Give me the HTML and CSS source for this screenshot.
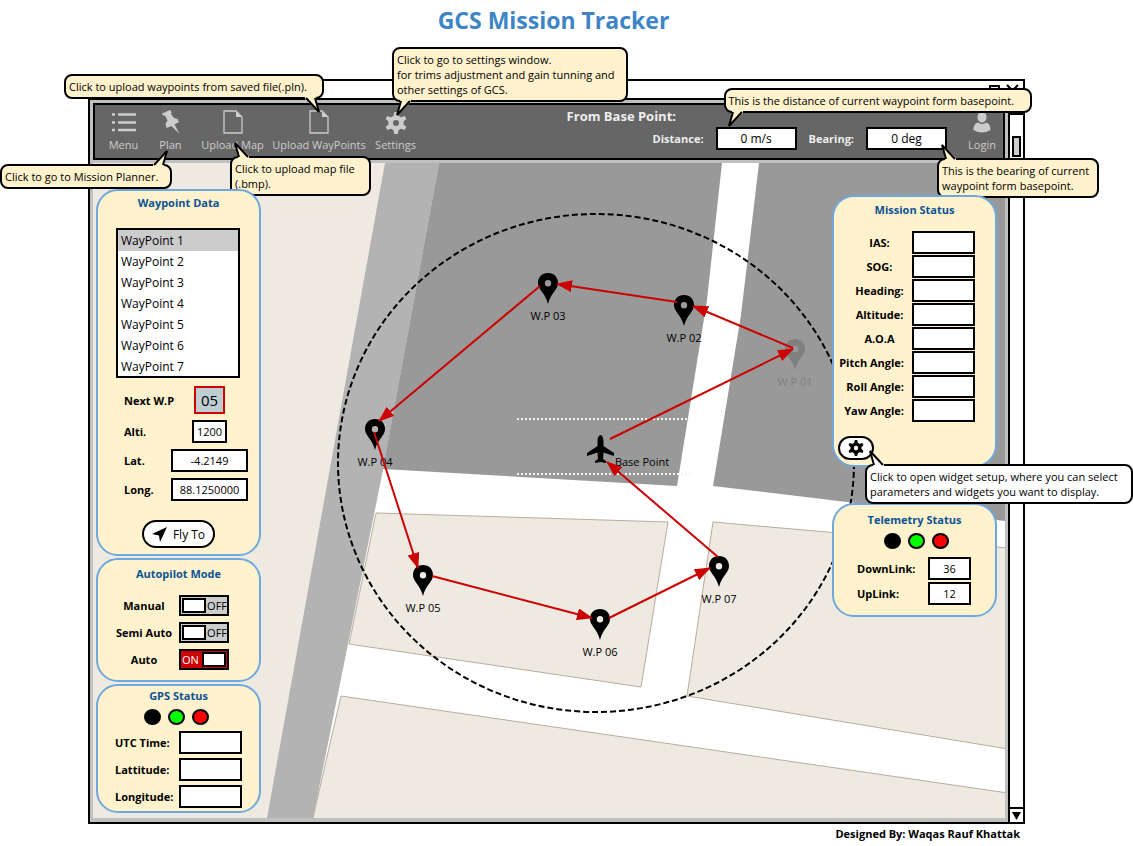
FILE: index.html
```html
<!DOCTYPE html>
<html lang="en">
<head>
<meta charset="utf-8">
<title>GCS Mission Tracker</title>
<link rel="stylesheet" href="styles.css">
</head>
<body>
<svg class="defs" aria-hidden="true">
  <symbol id="tail" viewBox="0 0 18 18">
    <path class="tail-fill" d="M5 18V15L2 2L16 15V18Z"/>
    <path class="tail-line" d="M6 16L2 2L15 16"/>
  </symbol>
  <symbol id="file" viewBox="0 0 20 24">
    <path d="M1 1H13L19 7V23H1Z" fill="none" stroke="#ccc" stroke-width="1.3"/>
    <path d="M13 1L19 7H13Z" fill="#ccc"/>
  </symbol>
  <symbol id="gear" viewBox="0 0 22 22">
    <circle cx="11" cy="11" r="5.300" fill="none" stroke="currentColor" stroke-width="4.600"/>
    <path fill="currentColor" d="M9.300 0H12.700L13.800 5H8.200ZM9.300 22H12.700L13.800 17H8.200ZM.6 7L2.400 4L7.300 5.700L4.500 10.500ZM21.400 7L19.600 4L14.700 5.700L17.500 10.500ZM.6 15L2.400 18L7.300 16.300L4.500 11.500ZM21.400 15L19.600 18L14.700 16.300L17.500 11.500Z"/>
  </symbol>
  <symbol id="pin" viewBox="-10 0 20 31">
    <path fill-rule="evenodd" d="M0 0C-6 0-10 4-10 10C-10 17-3 19 0 31C3 19 10 17 10 10C10 4 6 0 0 0ZM0 7a3.200 3.200 0 1 1 0 6.400a3.200 3.200 0 1 1 0-6.400Z"/>
  </symbol>
</svg>

<h1 class="page-title">GCS Mission Tracker</h1>

<main class="window">
  <div class="titlebar">
    <svg width="36" height="14" viewBox="0 0 36 14" aria-hidden="true">
      <path d="M6 2H15V12H6ZM23 1L34 12M34 1L23 12" fill="none" stroke="#000" stroke-width="2"/>
    </svg>
  </div>
  <div class="body">
    <div class="client">
      <header class="toolbar">
        <nav class="tools">
          <div class="tool">
            <button type="button" class="tool-button">
              <svg width="24" height="24" viewBox="0 0 24 24" aria-hidden="true"><path d="M0 4.500H3M6 4.500H24M0 12.500H3M6 12.500H24M0 20H3M6 20H24" stroke="#ccc" stroke-width="2.500"/></svg>
              Menu
            </button>
          </div>
          <div class="tool">
            <button type="button" class="tool-button">
              <svg width="18" height="24" viewBox="0 0 18 24" aria-hidden="true"><path fill="#ccc" d="M8 0L9.500 2L9 4L12 8L15.500 9L17 12L12.500 14.500L17.500 24L9.500 16L4.500 18L3.500 14L5.500 10.500L3 5.500L1 5.500L0 3.500Z"/></svg>
              Plan
            </button>
            <div class="tip tip-planner" role="tooltip">Click to go to Mission Planner.<svg class="tail up right"><use href="#tail"/></svg></div>
          </div>
          <div class="tool">
            <button type="button" class="tool-button">
              <svg width="20" height="24" aria-hidden="true"><use href="#file"/></svg>
              Upload Map
            </button>
            <div class="tip tip-map" role="tooltip">Click to upload map file<br>(.bmp).<svg class="tail up left"><use href="#tail"/></svg></div>
          </div>
          <div class="tool">
            <button type="button" class="tool-button">
              <svg width="20" height="24" aria-hidden="true"><use href="#file"/></svg>
              Upload WayPoints
            </button>
            <div class="tip tip-waypoints" role="tooltip">Click to upload waypoints from saved file(.pln).<svg class="tail down right"><use href="#tail"/></svg></div>
          </div>
          <div class="tool">
            <button type="button" class="tool-button">
              <svg width="22" height="22" aria-hidden="true"><use href="#gear"/></svg>
              Settings
            </button>
            <div class="tip tip-settings" role="tooltip">Click to go to settings window.<br>for trims adjustment and gain tunning and<br>other settings of GCS.<svg class="tail down left"><use href="#tail"/></svg></div>
          </div>
        </nav>
        <section class="readings">
          <h2 class="readings-title">From Base Point:</h2>
          <div class="reading-row">
            <label for="distance">Distance:</label>
            <div class="anchor">
              <input class="field reading" id="distance" value="0 m/s">
              <div class="tip tip-distance" role="tooltip">This is the distance of current waypoint form basepoint.<svg class="tail down left"><use href="#tail"/></svg></div>
            </div>
            <label for="bearing">Bearing:</label>
            <div class="anchor">
              <input class="field reading" id="bearing" value="0 deg">
              <div class="tip tip-bearing" role="tooltip">This is the bearing of current<br>waypoint form basepoint.<svg class="tail up left"><use href="#tail"/></svg></div>
            </div>
          </div>
        </section>
        <button type="button" class="tool-button login">
          <svg width="18" height="22" viewBox="0 0 18 22" aria-hidden="true"><path fill="#ccc" d="M9 0C12 0 13.500 2 13.500 5C13.500 8 11.500 10.500 9 10.500C6.500 10.500 4.500 8 4.500 5C4.500 2 6 0 9 0ZM5 10.500Q9 13.500 13 10.500C16.500 11.500 17.500 14 17.500 18Q9 23 .5 18C.5 14 1.500 11.500 5 10.500Z"/></svg>
          Login
        </button>
      </header>

      <div class="map">
        <svg class="map-art" viewBox="93 163 912 655" preserveAspectRatio="xMidYMid slice">
          <defs>
            <marker id="head" markerUnits="userSpaceOnUse" markerWidth="16" markerHeight="12" refX="15" refY="6" orient="auto"><path d="M0 0L16 6L0 12Z" fill="#c00"/></marker>
          </defs>
          <path fill="#b3b3b3" d="M385 163H440L384 470L314 818H267Z"/>
          <path fill="#fff" d="M439 163H1005V818H313L383 470Z"/>
          <path fill="#999" d="M439 163H722L707 300L677 486L383 469ZM759 163H1005V521L713 486L741 315Z"/>
          <path fill="#eee9e1" stroke="#b9ad9b" d="M376 513L668 522L641 687L349 644ZM713 522L1008 548V749L687 696ZM341 696L1008 793V822H312Z"/>
          <ellipse cx="596" cy="463" rx="258" ry="249" fill="none" stroke="#000" stroke-width="2" stroke-dasharray="6 3"/>
          <path d="M517 419H691M517 474H691" stroke="#f3f3f3" stroke-width="2" stroke-dasharray="2 2"/>
          <use href="#pin" x="785" y="339" width="20" height="31" fill="#808080"/>
          <use href="#pin" x="674" y="295" width="20" height="31"/>
          <use href="#pin" x="538" y="273" width="20" height="31"/>
          <use href="#pin" x="365" y="419" width="20" height="31"/>
          <use href="#pin" x="413" y="565" width="20" height="31"/>
          <use href="#pin" x="590" y="609" width="20" height="31"/>
          <use href="#pin" x="709" y="556" width="20" height="31"/>
          <path d="M600.500 435C602 435 603.500 438 603.500 441V446L614 453V456L603.500 452.500L603 459L606 461V463L600.500 462L595 463V461L598 459L597.500 452.500L587 456V453L597.500 446V441C597.500 438 599 435 600.500 435Z"/>
          <g class="pin-names">
            <text x="795" y="386" fill="#808080">W.P 01</text>
            <text x="684" y="342">W.P 02</text>
            <text x="548" y="320">W.P 03</text>
            <text x="375" y="466">W.P 04</text>
            <text x="423" y="612">W.P 05</text>
            <text x="600" y="656">W.P 06</text>
            <text x="719" y="603">W.P 07</text>
            <text x="642" y="466">Base Point</text>
          </g>
          <g stroke="#c00" stroke-width="2">
            <path marker-end="url(#head)" d="M610 439L793 349"/>
            <path marker-end="url(#head)" d="M793 348L693 306"/>
            <path marker-end="url(#head)" d="M677 302L557 284"/>
            <path marker-end="url(#head)" d="M540 286L379 421"/>
            <path marker-end="url(#head)" d="M374 432L418 568"/>
            <path marker-end="url(#head)" d="M432 576L592 618"/>
            <path marker-end="url(#head)" d="M609 618L710 568"/>
            <path marker-end="url(#head)" d="M718 557L607 462"/>
          </g>
        </svg>

        <div class="column">
          <section class="panel waypoint">
            <h2 class="panel-title">Waypoint Data</h2>
            <select class="waypoint-list" size="7" aria-label="Waypoints">
              <option selected>WayPoint 1</option>
              <option>WayPoint 2</option>
              <option>WayPoint 3</option>
              <option>WayPoint 4</option>
              <option>WayPoint 5</option>
              <option>WayPoint 6</option>
              <option>WayPoint 7</option>
            </select>
            <div class="rows">
              <div class="row"><label for="next">Next W.P</label><input class="field next" id="next" value="05"></div>
              <div class="row"><label for="alti">Alti.</label><input class="field alti" id="alti" value="1200"></div>
              <div class="row"><label for="lat">Lat.</label><input class="field" id="lat" value="-4.2149"></div>
              <div class="row"><label for="long">Long.</label><input class="field" id="long" value="88.1250000"></div>
            </div>
            <button type="button" class="pill fly">
              <svg width="15" height="15" viewBox="0 0 14 14" aria-hidden="true"><path d="M14 0L7.500 14L6.500 8L0 6.500Z"/></svg>
              Fly To
            </button>
          </section>

          <section class="panel autopilot">
            <h2 class="panel-title">Autopilot Mode</h2>
            <div class="rows">
              <label class="row"><span class="name">Manual</span><span class="toggle"><input type="checkbox"><span class="knob"></span><span class="state">OFF</span></span></label>
              <label class="row"><span class="name">Semi Auto</span><span class="toggle"><input type="checkbox"><span class="knob"></span><span class="state">OFF</span></span></label>
              <label class="row"><span class="name">Auto</span><span class="toggle on"><input type="checkbox" checked><span class="state">ON</span><span class="knob"></span></span></label>
            </div>
          </section>

          <section class="panel gps">
            <h2 class="panel-title">GPS Status</h2>
            <div class="lights"><span class="light"></span><span class="light green"></span><span class="light red"></span></div>
            <div class="rows">
              <div class="row"><label for="utc">UTC Time:</label><input class="field" id="utc"></div>
              <div class="row"><label for="lattitude">Lattitude:</label><input class="field" id="lattitude"></div>
              <div class="row"><label for="longitude">Longitude:</label><input class="field" id="longitude"></div>
            </div>
          </section>
        </div>

        <div class="column status-column">
          <section class="panel mission">
            <h2 class="panel-title">Mission Status</h2>
            <div class="rows">
              <div class="row"><label for="ias">IAS:</label><input class="field" id="ias"></div>
              <div class="row"><label for="sog">SOG:</label><input class="field" id="sog"></div>
              <div class="row"><label for="heading">Heading:</label><input class="field" id="heading"></div>
              <div class="row"><label for="altitude">Altitude:</label><input class="field" id="altitude"></div>
              <div class="row"><label for="aoa">A.O.A</label><input class="field" id="aoa"></div>
              <div class="row"><label for="pitch">Pitch Angle:</label><input class="field" id="pitch"></div>
              <div class="row"><label for="roll">Roll Angle:</label><input class="field" id="roll"></div>
              <div class="row"><label for="yaw">Yaw Angle:</label><input class="field" id="yaw"></div>
            </div>
            <div class="anchor setup">
              <button type="button" class="pill gear" aria-label="Widget setup"><svg width="16" height="16" aria-hidden="true"><use href="#gear"/></svg></button>
              <div class="tip tip-setup" role="tooltip">Click to open widget setup, where you can select<br>parameters and widgets you want to display.<svg class="tail up left"><use href="#tail"/></svg></div>
            </div>
          </section>

          <section class="panel telemetry">
            <h2 class="panel-title">Telemetry Status</h2>
            <div class="lights"><span class="light"></span><span class="light green"></span><span class="light red"></span></div>
            <div class="rows">
              <div class="row"><label for="down">DownLink:</label><input class="field" id="down" value="36"></div>
              <div class="row"><label for="up">UpLink:</label><input class="field" id="up" value="12"></div>
            </div>
          </section>
        </div>
      </div>
    </div>

    <div class="scrollbar">
      <div class="scroll-end"></div>
      <div class="track"><div class="thumb"></div></div>
      <div class="scroll-end bottom"><svg width="9" height="8" viewBox="0 0 9 8" aria-hidden="true"><path d="M0 0H9L4.500 8Z"/></svg></div>
    </div>
  </div>
</main>
<footer class="credit">Designed By: Waqas Rauf Khattak</footer>
</body>
</html>
```
FILE: styles.css
```css
* { box-sizing: border-box; }

body {
  margin: 0;
  background: #fff;
  color: #000;
  font: 11px/15px "Open Sans", "Noto Sans", sans-serif;
  overflow-x: hidden;
}

button, input, select { font: inherit; color: inherit; margin: 0; }

.defs { display: none; }

.page-title {
  margin: 0 0 38px;
  height: 41px;
  color: #3d85c6;
  font-size: 23px;
  line-height: 40px;
  text-align: center;
  padding-right: 26px;
}

.window {
  margin: 0 108px 0 88px;
  border: 2px solid #000;
}

.titlebar {
  display: flex;
  justify-content: flex-end;
  height: 17px;
  padding: 3px 3px 0;
}

.body { display: flex; border-top: 2px solid #000; }

.client {
  flex: 1;
  display: flex;
  flex-direction: column;
  gap: 3px;
  padding: 3px 3px 4px;
  background: #c0c0c0;
}

/* Toolbar */
.toolbar {
  position: relative;
  z-index: 1;
  display: flex;
  height: 57px;
  border: 2px solid #000;
  background: #666;
  color: #ccc;
}

.tools {
  display: grid;
  grid-template-columns: 57px 37px 87px 86px 67px;
}

.tool, .anchor { position: relative; }

.tool-button {
  display: flex;
  flex-direction: column;
  align-items: center;
  justify-content: flex-end;
  gap: 3px;
  width: 100%;
  height: 53px;
  padding: 0 0 6px;
  border: 0;
  background: none;
  white-space: nowrap;
}

.readings { margin-left: auto; font-weight: bold; color: #eee; }

.readings-title {
  margin: 4px 0 3px;
  font-size: 13px;
  line-height: 15px;
}

.reading-row {
  display: flex;
  align-items: center;
  justify-content: flex-end;
  gap: 12px;
  padding-left: 86px;
}

.login { width: 40px; margin: 0 1px 0 15px; }

/* Fields */
.field {
  display: block;
  width: 63px;
  height: 23px;
  padding: 0;
  border: 2px solid #000;
  background: #fff;
  color: #000;
  font-weight: normal;
  text-align: center;
}

.reading { width: 81px; font-size: 12px; }

/* Callouts */
.tip {
  position: absolute;
  border: 2px solid #000;
  border-radius: 8px;
  padding: 3px;
  background: #fff2cc;
  color: #000;
  font-weight: normal;
  white-space: nowrap;
  --tip-fill: #fff2cc;
}

.tip-planner { right: 17px; top: 59px; width: 172px; }
.tip-map { left: 41px; top: 51px; width: 141px; }
.tip-waypoints { right: 38px; top: -31px; width: 260px; }
.tip-settings { left: 30px; top: -58px; width: 236px; }
.tip-distance { left: 8px; top: -39px; width: 308px; }
.tip-bearing { left: 71px; top: 31px; width: 162px; }
.tip-setup { left: 27px; top: 28px; width: 268px; background: #fff; --tip-fill: #fff; }

.tail { position: absolute; width: 18px; height: 18px; }
.tail.up { bottom: 100%; margin-bottom: -1px; }
.tail.down { top: 100%; margin-top: -1px; }
.tail.left { left: 1px; }
.tail.right { right: 1px; }
.tail.up.right { transform: scaleX(-1); }
.tail.down.left { transform: scaleY(-1); }
.tail.down.right { transform: scale(-1); }
.tail-fill { fill: var(--tip-fill); }
.tail-line { fill: none; stroke: #000; stroke-width: 2; }

/* Map */
.map {
  position: relative;
  display: flex;
  justify-content: space-between;
  align-items: flex-start;
  padding: 26px 8px 5px 3px;
  background: #eee9e1;
}

.map-art {
  position: absolute;
  inset: 0;
  width: 100%;
  height: 100%;
}

.pin-names { text-anchor: middle; }

.column {
  position: relative;
  z-index: 2;
  display: flex;
  flex-direction: column;
  gap: 2px;
  width: 165px;
}

.status-column { gap: 36px; padding-top: 6px; }

/* Panels */
.panel {
  border: 2px solid #6fa8dc;
  border-radius: 22px;
  background: #fff2cc;
}

.panel-title {
  margin: 0;
  color: #0b5394;
  font-size: 11px;
  line-height: 16px;
  text-align: center;
}

.rows { display: grid; font-weight: bold; }
.row { display: grid; align-items: center; }
.row label, .name { white-space: nowrap; }

.waypoint { padding: 4px 0 6px; }

.waypoint-list {
  display: block;
  width: 124px;
  height: 150px;
  margin: 17px 0 8px 18px;
  padding: 0;
  border: 2px solid #000;
  border-radius: 0;
  background: #fff;
  font-size: 12px;
  overflow: hidden;
}

.waypoint-list option {
  height: 21px;
  padding: 2px 3px 4px;
  line-height: 15px;
}

.waypoint-list option:checked { background: #ccc linear-gradient(#ccc, #ccc); color: #000; }

.waypoint .rows { gap: 6px; padding: 0 11px 0 26px; }
.waypoint .row { grid-template-columns: 47px 77px; }
.waypoint .field { width: 77px; justify-self: center; }

.waypoint .next {
  width: 31px;
  height: 28px;
  border-color: #c00;
  background: #bdcdd2;
  font-size: 15px;
}

.waypoint .alti { width: 35px; }

.pill {
  display: flex;
  align-items: center;
  justify-content: center;
  padding: 0;
  border: 2px solid #000;
  border-radius: 14px;
  background: #fff;
}

.fly { gap: 6px; width: 73px; height: 28px; margin: 19px auto 0; font-size: 12px; }

.autopilot { padding: 6px 0 10px; }
.autopilot .rows { gap: 6px; padding: 13px 17px 0; }
.autopilot .row { grid-template-columns: 58px 50px; gap: 6px; }
.name { text-align: center; }

.toggle {
  position: relative;
  display: flex;
  align-items: center;
  justify-content: space-between;
  height: 21px;
  border: 2px solid #000;
  background: #ccc;
  font-weight: normal;
}

.toggle input {
  position: absolute;
  inset: 0;
  width: 100%;
  height: 100%;
  margin: 0;
  opacity: 0;
}

.knob {
  flex: none;
  width: 24px;
  height: 15px;
  margin: 0 1px;
  border: 2px solid #000;
  background: #fff;
}

.toggle.on { background: #c00; color: #fff; }
.on .state { padding-left: 1px; }

.lights {
  display: flex;
  justify-content: center;
  gap: 7px;
  padding: 5px 0;
}

.light {
  width: 17px;
  height: 16px;
  border: 2px solid #000;
  border-radius: 50%;
  background: #000;
}

.green { background: #0f0; }
.red { background: #f00; }

.gps { padding: 2px 0 3px; }
.gps .lights { padding: 5px 4px 6px 0; }
.gps .rows { gap: 4px; padding-left: 17px; }
.gps .row { grid-template-columns: 58px 63px; gap: 6px; }

.mission { padding: 5px 0; }
.mission .rows { gap: 1px; padding: 13px 20px 0 0; }
.mission .row { grid-template-columns: 1fr 63px; gap: 8px; }
.mission label { justify-self: end; min-width: 49px; text-align: center; }

.setup { margin: 14px 0 0 4px; width: 36px; }
.gear { width: 36px; height: 24px; }

.telemetry { padding: 7px 0 10px; }
.telemetry .lights { padding: 5px 0 8px 4px; }
.telemetry .rows { gap: 2px; padding: 0 24px 0 23px; }
.telemetry .row { grid-template-columns: 1fr 43px; }
.telemetry .field { width: 43px; }

/* Scrollbar */
.scrollbar {
  display: flex;
  flex-direction: column;
  width: 15px;
  border-left: 2px solid #000;
}

.scroll-end {
  display: grid;
  place-items: center;
  height: 15px;
  border-bottom: 2px solid #000;
}

.scroll-end.bottom { border-top: 2px solid #000; border-bottom: 0; }

.track { flex: 1; padding: 21px 2px 0; }
.thumb { width: 9px; height: 21px; border: 2px solid #000; background: #ccc; }

.credit {
  padding: 2px 113px 4px 0;
  font-weight: bold;
  text-align: right;
}
```
